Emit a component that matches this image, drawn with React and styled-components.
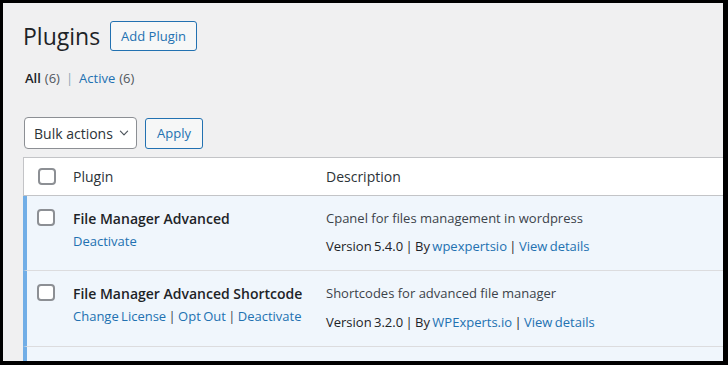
import React from 'react';
import styled, { createGlobalStyle } from 'styled-components';

const GlobalStyle = createGlobalStyle`
  html, body {
    margin: 0;
    padding: 0;
    background: #000;
  }
  * {
    box-sizing: border-box;
  }
`;

const font = `"Open Sans", "Noto Sans", "Liberation Sans", sans-serif`;

const Frame = styled.div`
  width: 728px;
  height: 365px;
  border-style: solid;
  border-color: #000;
  border-width: 3px 5px 4px 3px;
  background: #f0f0f1;
  overflow: hidden;
  font-family: ${font};
  color: #3c434a;
  font-size: 13px;
`;

const Wrap = styled.div`
  padding: 18px 0 0 20px;
`;

const HeaderRow = styled.div`
  display: flex;
  align-items: center;
  gap: 10px;
  height: 30px;
`;

const Title = styled.h1`
  margin: 0;
  font-size: 23px;
  font-weight: 400;
  color: #1d2327;
  line-height: 30px;
`;

const OutlineBtn = styled.button`
  font-family: ${font};
  font-size: 13px;
  color: #2271b1;
  background: #f6f7f7;
  border: 1px solid #2271b1;
  border-radius: 3px;
  height: ${p => p.h || 30}px;
  padding: 0 ${p => p.px || 10}px;
  line-height: 1;
  cursor: pointer;
`;

const Filters = styled.div`
  margin-top: 17px;
  display: flex;
  align-items: center;
  gap: 4px;
  height: 20px;
  padding-left: 2px;
  color: #50575e;
`;

const Current = styled.span`
  color: #1d2327;
  font-weight: 600;
`;

const Count = styled.span`
  color: #50575e;
`;

const Sep = styled.span`
  color: #8fa4b8;
  margin: 0 2px;
`;

const Link = styled.a`
  color: #2271b1;
  text-decoration: none;
`;

const Controls = styled.div`
  margin-top: 29px;
  display: flex;
  align-items: center;
  gap: 8px;
  padding-left: 1px;
`;

const Select = styled.div`
  display: flex;
  align-items: center;
  justify-content: space-between;
  width: 113px;
  height: 32px;
  padding: 0 6px 0 9px;
  background: #fff;
  border: 1px solid #8c8f94;
  border-radius: 4px;
  color: #2c3338;
  font-size: 14px;
`;

const Table = styled.div`
  margin-top: 8px;
  width: 720px;
  background: #fff;
  border-top: 1px solid #c3c4c7;
  border-left: 1px solid #c3c4c7;
`;

const Row = styled.div`
  display: grid;
  grid-template-columns: ${p => (p.active ? 46 : 49)}px 253px 1fr;
  background: ${p => (p.active ? '#f0f6fc' : '#fff')};
  border-left: ${p => (p.active ? '4px solid #72aee6' : '0')};
  margin-left: ${p => (p.active ? '-1px' : '0')};
  border-bottom: 1px solid ${p => (p.head ? '#c3c4c7' : '#dcdcde')};
  height: ${p => p.h}px;
`;

const CheckCell = styled.div`
  padding: ${p => p.pt}px 0 0 ${p => p.pl}px;
`;

const Box = styled.span`
  display: block;
  width: 18px;
  height: 17px;
  border: 2px solid #8c8f94;
  border-radius: 4px;
  background: #fff;
`;

const Cell = styled.div`
  padding-top: ${p => p.pt}px;
  display: flex;
  flex-direction: column;
  gap: ${p => p.gap || 0}px;
`;

const HeadText = styled.span`
  font-size: 14px;
  color: #2c3338;
  line-height: 20px;
`;

const PluginName = styled.strong`
  font-size: 14px;
  font-weight: 600;
  color: #1d2327;
  line-height: 20px;
`;

const Line = styled.div`
  font-size: 13px;
  line-height: 20px;
  word-spacing: ${p => (p.tight ? -1 : 0)}px;
  color: ${p => p.color || '#3c434a'};
`;

const Pipe = styled.span`
  color: #3c434a;
`;

const Chevron = () => (
  <svg width="12" height="12" viewBox="0 0 20 20" fill="none">
    <path d="M4 7l6 6 6-6" stroke="#50575e" strokeWidth="2" strokeLinecap="round" strokeLinejoin="round" />
  </svg>
);

const plugins = [
  {
    name: 'File Manager Advanced',
    actions: ['Deactivate'],
    desc: 'Cpanel for files management in wordpress',
    version: '5.4.0',
    author: 'wpexpertsio',
    versionGap: 8,
    height: 75,
  },
  {
    name: 'File Manager Advanced Shortcode',
    actions: ['Change License', 'Opt Out', 'Deactivate'],
    desc: 'Shortcodes for advanced file manager',
    version: '3.2.0',
    author: 'WPExperts.io',
    versionGap: 9,
    height: 76,
  },
];

export default function App() {
  return (
    <>
      <GlobalStyle />
      <Frame>
        <Wrap>
          <HeaderRow>
            <Title>Plugins</Title>
            <OutlineBtn>Add Plugin</OutlineBtn>
          </HeaderRow>

          <Filters>
            <Current>All</Current>
            <Count>(6)</Count>
            <Sep>|</Sep>
            <Link>Active</Link>
            <Count>(6)</Count>
          </Filters>

          <Controls>
            <Select>
              <span>Bulk actions</span>
              <Chevron />
            </Select>
            <OutlineBtn h={31} px={11}>Apply</OutlineBtn>
          </Controls>

          <Table>
            <Row head h={38}>
              <CheckCell pt={10} pl={14}>
                <Box />
              </CheckCell>
              <Cell pt={9}>
                <HeadText>Plugin</HeadText>
              </Cell>
              <Cell pt={9}>
                <HeadText>Description</HeadText>
              </Cell>
            </Row>
            {plugins.map(p => (
              <Row active key={p.name} h={p.height}>
                <CheckCell pt={13} pl={10}>
                  <Box />
                </CheckCell>
                <Cell pt={13} gap={2}>
                  <PluginName>{p.name}</PluginName>
                  <Line tight>
                    {p.actions.map((a, i) => (
                      <React.Fragment key={a}>
                        {i > 0 && <Pipe> | </Pipe>}
                        <Link>{a}</Link>
                      </React.Fragment>
                    ))}
                  </Line>
                </Cell>
                <Cell pt={12} gap={p.versionGap}>
                  <Line>{p.desc}</Line>
                  <Line tight color="#1d2327">
                    Version {p.version} | By <Link>{p.author}</Link> | <Link>View details</Link>
                  </Line>
                </Cell>
              </Row>
            ))}
            <Row active h={30} />
          </Table>
        </Wrap>
      </Frame>
    </>
  );
}
